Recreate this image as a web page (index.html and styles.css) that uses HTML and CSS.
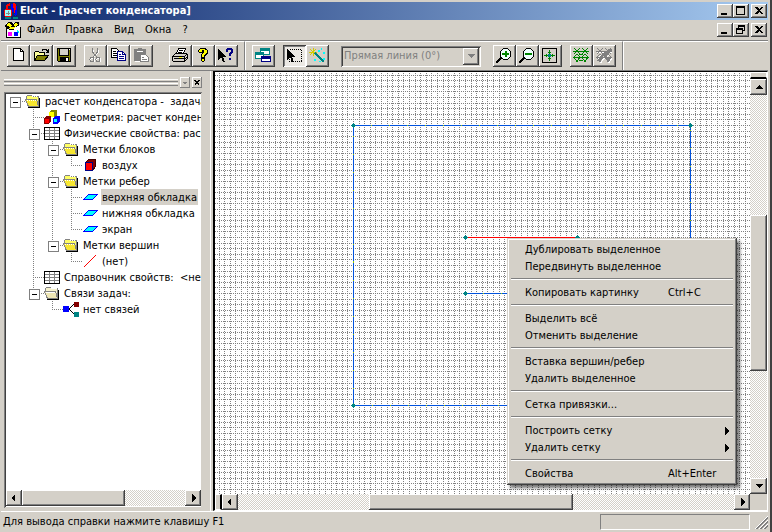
FILE: index.html
```html
<!DOCTYPE html>
<html lang="ru">
<head>
<meta charset="utf-8">
<title>Elcut - [расчет конденсатора]</title>
<link rel="stylesheet" href="styles.css">
</head>
<body>
<svg class="defs" aria-hidden="true">
  <symbol id="folder" viewBox="0 0 16 16">
    <path d="M2 5h13v10H3z" fill="#000"/>
    <path d="M1.5 3.5l1-1h4l1 1h6v9h-11z" fill="#ffff63" stroke="#848484"/>
    <path d="M.5 6.5h11l2 7h-10z" fill="#f7e730" stroke="#848484"/>
    <path d="M2 7.5h9M7 3.5h6" stroke="#fff" stroke-dasharray="1 1"/>
    <path d="M3 14.5h12M14.5 5v10" stroke="#000"/>
  </symbol>
  <symbol id="folder-pale" viewBox="0 0 16 16">
    <path d="M1.5 3.5l1-1h4l1 1h6v9h-11z" fill="#f7f3ce" stroke="#848484"/>
    <path d="M.5 6.5h11l2 7h-10z" fill="#efe7b5" stroke="#848484"/>
    <path d="M2 7.5h9M7 3.5h6" stroke="#fff"/>
    <path d="M3 14.5h12M14.5 5v10" stroke="#000"/>
  </symbol>
  <symbol id="table" viewBox="0 0 16 16">
    <path d="M.5 2.5h15v12H.5z" fill="#fff" stroke="#000"/>
    <path d="M1 5.5h14M1 8.5h14M1 11.5h14M5.500 3v11M10.500 3v11" stroke="#808080"/>
  </symbol>
  <symbol id="edge" viewBox="0 0 16 16">
    <path d="M6.500 5.500h9l-5 5h-9z" fill="#0ff" stroke="#00f"/>
  </symbol>
  <symbol id="left" viewBox="0 0 8 8"><path d="M5 0v8L1 4z"/></symbol>
  <symbol id="right" viewBox="0 0 8 8"><path d="M3 0v8l4-4z"/></symbol>
  <symbol id="up" viewBox="0 0 8 8"><path d="M0 6h8L4 2z"/></symbol>
  <symbol id="down" viewBox="0 0 8 8"><path d="M0 2h8L4 6z"/></symbol>
  <symbol id="min" viewBox="0 0 10 10"><path d="M1 7h6v2H1z"/></symbol>
  <symbol id="cross" viewBox="0 0 10 10"><path d="M1 1h2l2 2 2-2h2L6 4.500 9 8H7L5 6 3 8H1l3-3.500z"/></symbol>
</svg>
<div class="window">
  <header class="titlebar">
    <svg class="app-icon" viewBox="0 0 16 16"><path d="M4 6V3l3-2" fill="none" stroke="#f00" stroke-width="2"/><path d="M8 1h3v8H8z" fill="#00f"/><path d="M10 0h2l1 2v8h-2z" fill="#f00"/><path d="M13 3h1v8l-2 2-2-2h2z" fill="#00f"/><circle cx="5" cy="10" r="4" fill="#9ff" stroke="#f00"/><path d="M3 10h4M5 8v4" stroke="#888"/><path d="M2 15h6M10 15h5" stroke="#088" stroke-width="2"/></svg>
    <h1>Elcut - [расчет конденсатора]</h1>
    <div class="caption">
      <button aria-label="Свернуть"><svg><use href="#min"/></svg></button>
      <button aria-label="Развернуть"><svg viewBox="0 0 10 10"><path d="M.5 1h8v7.500h-8z" fill="none" stroke="#000"/><path d="M0 0h9v2H0z"/></svg></button>
      <button class="close" aria-label="Закрыть"><svg><use href="#cross"/></svg></button>
    </div>
  </header>
  <nav class="menubar">
    <svg class="doc-icon" viewBox="0 0 16 16"><path d="M1 1h11l3 3v12H1z" fill="#fff"/><path d="M1.500 6v9.500h14V5" fill="none" stroke="#000"/><path d="M0 3l3-3h3l2 2 3-2h3v4l-4 1-1 3H5L1 6z" fill="#000"/><path d="M1 3l3-2 3 2-2 2zM8 3l3-2 2 1-3 3zM3 6l3-1 4 0-1 2H5z" fill="#ff0"/><path d="M3 10h4v4H3z" fill="#f0f"/><path d="M9 10h4v4H9z" fill="#00f"/><path d="M12 8l2 2-1 2z" fill="#0ff"/></svg>
    <button>Файл</button><button>Правка</button><button>Вид</button><button>Окна</button><button>?</button>
    <div class="caption">
      <button aria-label="Свернуть документ"><svg><use href="#min"/></svg></button>
      <button aria-label="Восстановить документ"><svg viewBox="0 0 10 10"><path d="M2.500 3V1h6v4.500H7M.5 4h6v4.500h-6z" fill="none" stroke="#000"/><path d="M2 0h7v2H2zM0 3h7v2H0z"/></svg></button>
      <button class="close" aria-label="Закрыть документ"><svg><use href="#cross"/></svg></button>
    </div>
  </nav>
  <div class="toolbars">
    <div class="toolbar">
      <div class="group">
        <button aria-label="Создать"><svg viewBox="0 0 16 16"><path d="M3.500.5h7l3 3v9h-10z" fill="#fff" stroke="#000"/><path d="M10.500 0v3.500H14" fill="none" stroke="#000"/></svg></button>
        <button aria-label="Открыть"><svg viewBox="0 0 16 16"><path d="M1.500 12.500v-8l1-1h3l1 1h5v3" fill="#ff9" stroke="#000"/><path d="M1.500 12.500l3-5h11l-4 5z" fill="#808000" stroke="#000"/><path d="M9 2.500l1-1h3l2 2M15.500 1v3h-3" fill="none" stroke="#000"/></svg></button>
        <button aria-label="Сохранить"><svg viewBox="0 0 16 16"><path d="M1.500.5h13v13h-12l-1-1z" fill="#808000" stroke="#000"/><path d="M4 1h8v6H4z" fill="#d4d0c8"/><path d="M3.500 1v6.500h9V1" fill="none" stroke="#000"/><path d="M4 9h9v5H4z"/><path d="M10 10h2v3h-2zM13 1h1v1h-1z" fill="#fff"/></svg></button>
      </div>
      <div class="group">
        <button disabled aria-label="Вырезать"><svg viewBox="0 0 16 16"><g fill="none" stroke="#fff"><path d="M6 2v3l5 5M11 2v3L6 10"/><circle cx="5.500" cy="12" r="2"/><circle cx="11.500" cy="12" r="2"/></g><g fill="none" stroke="#808080"><path d="M5.500 0v4l5 6M10.500 0v4l-5 6"/><circle cx="5" cy="11.500" r="2"/><circle cx="11" cy="11.500" r="2"/></g></svg></button>
        <button aria-label="Копировать"><svg viewBox="0 0 16 16"><path d="M1.500.5h5l3 3v6h-8z" fill="#fff" stroke="#000"/><path d="M3 3.500h3M3 5.500h4M3 7.500h4" stroke="#000"/><path d="M7.500 3.500h5l3 3v6h-8z" fill="#fff" stroke="#000084"/><path d="M12.500 4v2.500h3M9 6.500h2M9 8.500h5M9 10.500h5" fill="none" stroke="#000084"/></svg></button>
        <button disabled aria-label="Вставить"><svg viewBox="0 0 16 16"><path d="M2 2h11v12H2z" fill="#fff"/><path d="M1 1h4V0h4v1h4v5H8v7H1z" fill="#808080"/><path d="M4 3h6v1H4z" fill="#fff"/><path d="M7.500 6.500h5l3 3v4h-8z" fill="#fff" stroke="#808080"/><path d="M9 9.500h2M9 11.500h5" stroke="#808080"/></svg></button>
      </div>
      <div class="group wide">
        <button aria-label="Печать"><svg viewBox="0 0 16 16"><path d="M4.500 5.500l2-5h7l-2 5" fill="#fff" stroke="#000"/><path d="M7 2.500h4M6 4.500h4" stroke="#000"/><path d="M.5 8.500l3-3h11l1 1v4l-3 3h-11l-1-1z" fill="#d4d0c8" stroke="#000"/><path d="M1 8.500h11.500v4M13 8l2-2M2 10.500h10M13 11l2-2" fill="none" stroke="#000"/><path d="M7 9h3v1H7z" fill="#ff0"/></svg></button>
        <button aria-label="Справка"><svg viewBox="0 0 16 16"><path d="M5 0h6v1h1v1h1v4h-1v1h-1v1h-1v5H9v1H7v-1H6V6h1V5H4V4H3V2h1V1h1z"/><path d="M5 1h5v1H5zM4 2h3v2H4zM9 2h3v3H9zM8 5h3v1H8zM7 6h3v1H7zM7 7h2v2H7zM7 11h2v2H7z" fill="#ff0"/></svg></button>
        <button aria-label="Контекстная справка"><svg viewBox="0 0 16 16"><path d="M0 1v11l3-3 2 5h2L5 9h3z"/><path d="M9 0h5v1h1v4h-1v1h-1v2h-2V5h1V4h1V2h-3v2H8V1h1zM11 10h2v2h-2z" fill="#000084"/></svg></button>
      </div>
    </div>
    <div class="toolbar second">
      <div class="group">
        <button aria-label="Окна задачи"><svg viewBox="0 0 16 16"><g fill="#fff"><path d="M5.500.5h9v6h-9z" stroke="#008484"/><path d="M.5 4.500h8v6h-8z" stroke="#008484"/><path d="M6.500 8.500h9v5h-9z" stroke="#000084"/></g><path d="M5 0h10v3H5zM0 4h9v3H0z" fill="#008484"/><path d="M6 8h10v3H6z" fill="#000084"/></svg></button>
      </div>
      <div class="group">
        <button class="pressed" aria-label="Выделение"><svg viewBox="0 0 16 16"><path d="M3.500 1.500h12v12h-12z" fill="none" stroke="#000" stroke-dasharray="1 1"/><path d="M1 0v12l3-3 2 5h2L6 9h3z"/></svg></button>
        <button aria-label="Вставка"><svg viewBox="0 0 16 16"><path d="M0 4.500h8M4 0v8M1 1l6 6M7 1L1 7" stroke="#d6ce00"/><path d="M6 5l8 8 1 1" stroke="#008484" stroke-width="2"/><path d="M9 2h2v2H9zM14 4h2v2h-2zM5 11h2v2H5zM14 10h2v2h-2zM10 13h2v1h-2zM12 0h1v2h-1z" fill="#0ff"/></svg></button>
      </div>
      <div class="combo"><select disabled aria-label="Тип линии"><option>Прямая линия (0°)</option></select><span class="drop"><svg><use href="#down"/></svg></span></div>
      <div class="group">
        <button aria-label="Увеличить"><svg viewBox="0 0 16 16"><circle cx="9.500" cy="6" r="5.500" fill="#efffff" stroke="#000"/><path d="M5 10l-5 5" stroke="#000" stroke-width="2"/><path d="M6 6h7M9.500 3v6" stroke="#008400" stroke-width="2"/></svg></button>
        <button aria-label="Уменьшить"><svg viewBox="0 0 16 16"><circle cx="9.500" cy="6" r="5.500" fill="#efffff" stroke="#000"/><path d="M5 10l-5 5" stroke="#000" stroke-width="2"/><path d="M6 6h7" stroke="#008400" stroke-width="2"/></svg></button>
        <button aria-label="Показать всё"><svg viewBox="0 0 16 16"><path d="M.5.5h14v14H.5z" fill="none" stroke="#000"/><path d="M2 7.500h11M7.500 2v11M4.500 6v3M10.500 6v3M6 4.500h3M6 10.500h3" stroke="#008400"/><path d="M6 6h3v3H6z" fill="#008484"/></svg></button>
      </div>
      <div class="group">
        <button aria-label="Построить сетку"><svg viewBox="0 0 16 16"><path d="M0 3.500h16M0 9.500h16M1 0l6 6M7 0L1 6M9 0l6 6M15 0L9 6M4 6L1 9l3 5 3-5zM12 6L9 9l3 5 3-5zM6 6h4M6 12h4" fill="none" stroke="#008400"/></svg></button>
        <button disabled aria-label="Удалить сетку"><svg viewBox="0 0 16 16"><path d="M1 4.500h15M1 10.500h15M2 1l6 6M16 1l-6 6M5 7l-3 3 3 5 3-5zM13 7l-3 3 3 5 3-5z" fill="none" stroke="#fff"/><path d="M0 3.500h16M0 9.500h16M1 0l6 6M7 0L1 6M9 0l6 6M15 0L9 6M4 6L1 9l3 5 3-5zM12 6L9 9l3 5 3-5z" fill="none" stroke="#808080"/><path d="M2 13l5-6 6-5h2l-6 6 5 5" fill="none" stroke="#808080" stroke-width="2"/></svg></button>
      </div>
    </div>
  </div>
  <main>
    <aside>
      <div class="grip"><div class="bars"><i></i><i></i></div><button aria-label="Меню панели" disabled><svg><use href="#down"/></svg></button><button aria-label="Закрыть панель"><svg><use href="#cross"/></svg></button></div>
      <div class="treebox">
        <ul>
          <li><i class="g h box"></i><svg><use href="#folder"/></svg><span>расчет конденсатора -&nbsp; задача</span></li>
          <li><i class="g"></i><i class="g v h"></i><svg viewBox="0 0 16 16"><path d="M5 3l2-2h6v5l-2 2H5z" fill="#848400"/><path d="M5 3h5v5H5z" fill="#ff0"/><path d="M0 9l2-2h5v5l-2 3H0z" fill="#840000"/><path d="M1 10h4v4H1z" fill="#f00"/><path d="M9 9l2-2h5v5l-2 3H9z" fill="#00f"/><path d="M10 10h3v3h-3z" fill="#0ff"/></svg><span>Геометрия: расчет конденсатора</span></li>
          <li><i class="g"></i><i class="g v h box"></i><svg><use href="#table"/></svg><span>Физические свойства: расчет</span></li>
          <li><i class="g"></i><i class="g v"></i><i class="g v h box"></i><svg><use href="#folder"/></svg><span>Метки блоков</span></li>
          <li><i class="g"></i><i class="g v"></i><i class="g v"></i><i class="g end h"></i><svg viewBox="0 0 16 16"><path d="M3.500 5.500l3-3h7v7l-3 4z" fill="#840000" stroke="#400000"/><path d="M3.500 5.500h7v8h-7z" fill="#f00" stroke="#000084"/></svg><span>воздух</span></li>
          <li><i class="g"></i><i class="g v"></i><i class="g v h box"></i><svg><use href="#folder"/></svg><span>Метки ребер</span></li>
          <li><i class="g"></i><i class="g v"></i><i class="g v"></i><i class="g v h"></i><svg><use href="#edge"/></svg><span class="selected">верхняя обкладка</span></li>
          <li><i class="g"></i><i class="g v"></i><i class="g v"></i><i class="g v h"></i><svg><use href="#edge"/></svg><span>нижняя обкладка</span></li>
          <li><i class="g"></i><i class="g v"></i><i class="g v"></i><i class="g end h"></i><svg><use href="#edge"/></svg><span>экран</span></li>
          <li><i class="g"></i><i class="g v"></i><i class="g end h box"></i><svg><use href="#folder"/></svg><span>Метки вершин</span></li>
          <li><i class="g"></i><i class="g v"></i><i class="g"></i><i class="g end h"></i><svg viewBox="0 0 16 16"><path d="M2 14L14 2" stroke="#f00"/></svg><span>(нет)</span></li>
          <li><i class="g"></i><i class="g v h"></i><svg><use href="#table"/></svg><span>Справочник свойств:&nbsp; &lt;нет&gt;</span></li>
          <li><i class="g"></i><i class="g end h box"></i><svg><use href="#folder-pale"/></svg><span>Связи задач:</span></li>
          <li><i class="g"></i><i class="g"></i><i class="g end h"></i><svg viewBox="0 0 16 16"><path d="M3 8h3l5-5M6 8l5 5" fill="none" stroke="#000"/><circle cx="3" cy="8" r="3.500" fill="#00f"/><path d="M11 1h5v5h-5z" fill="#840000"/><path d="M11 11h5v5h-5z" fill="#008484"/></svg><span>нет связей</span></li>
        </ul>
        <div class="scroll"><button aria-label="Влево"><svg><use href="#left"/></svg></button><i class="thumb tree-thumb"></i><i class="tree-rest"></i><button aria-label="Вправо"><svg><use href="#right"/></svg></button></div>
      </div>
    </aside>
    <section class="view">
      <svg class="model" role="img" aria-label="Геометрия модели">
        <defs>
          <pattern id="snap" x="138" y="53" width="28" height="28" patternUnits="userSpaceOnUse">
            <g stroke="#808080" stroke-dasharray="1 1">
              <path d="M0 .5h28M0 6.500h28M0 11.500h28M0 17.500h28M0 22.500h28"/>
              <path d="M.5 0v28M6.500 0v28M11.500 0v28M17.500 0v28M22.500 0v28"/>
            </g>
          </pattern>
        </defs>
        <rect width="100%" height="100%" fill="#fff"/>
        <rect width="100%" height="100%" fill="url(#snap)"/>
        <g fill="none">
          <path d="M138.500 53.500h337v280h-337zM250.500 221.500h112" stroke="#0052de"/>
          <path d="M138.500 53.500h337v280h-337zM250.500 221.500h112" stroke="#9c0" stroke-dasharray="1 17" stroke-dashoffset="-17"/>
          <path d="M250.500 165.500h112" stroke="#f00"/>
        </g>
        <path fill="#008484" d="M137 52h3v3h-3zM136 53h5v1h-5zM138 51h1v5h-1zM474 52h3v3h-3zM473 53h5v1h-5zM475 51h1v5h-1zM137 332h3v3h-3zM136 333h5v1h-5zM138 331h1v5h-1zM249 164h3v3h-3zM248 165h5v1h-5zM250 163h1v5h-1zM361 164h3v3h-3zM360 165h5v1h-5zM362 163h1v5h-1zM249 220h3v3h-3zM248 221h5v1h-5zM250 219h1v5h-1z"/>
      </svg>
      <div class="scroll vertical"><i class="split"></i><button aria-label="Вверх"><svg><use href="#up"/></svg></button><i class="v-before"></i><i class="thumb v-thumb"></i><i class="v-after"></i><button aria-label="Вниз"><svg><use href="#down"/></svg></button></div>
      <div class="scroll"><i class="split"></i><button aria-label="Влево"><svg><use href="#left"/></svg></button><i class="h-before"></i><i class="thumb h-thumb"></i><i class="h-after"></i><button aria-label="Вправо"><svg><use href="#right"/></svg></button></div>
      <div class="context" role="menu">
        <button role="menuitem">Дублировать выделенное</button>
        <button role="menuitem">Передвинуть выделенное</button>
        <hr>
        <button role="menuitem"><span>Копировать картинку</span><kbd>Ctrl+C</kbd></button>
        <hr>
        <button role="menuitem">Выделить всё</button>
        <button role="menuitem">Отменить выделение</button>
        <hr>
        <button role="menuitem">Вставка вершин/ребер</button>
        <button role="menuitem">Удалить выделенное</button>
        <hr>
        <button role="menuitem">Сетка привязки...</button>
        <hr>
        <button role="menuitem"><span>Построить сетку</span><svg><use href="#right"/></svg></button>
        <button role="menuitem"><span>Удалить сетку</span><svg><use href="#right"/></svg></button>
        <hr>
        <button role="menuitem"><span>Свойства</span><kbd>Alt+Enter</kbd></button>
      </div>
    </section>
  </main>
  <footer><span>Для вывода справки нажмите клавишу F1</span><div class="cell"></div><svg class="sizer" viewBox="0 0 13 13"><path d="M0 13L13 0M4 13l9-9M8 13l5-5" stroke="#fff"/><path d="M1 13L13 1M2 13L13 2M5 13l8-8M6 13l7-7M9 13l4-4M10 13l3-3" stroke="#808080"/></svg></footer>
</div>
</body>
</html>
```
FILE: styles.css
```css
* { box-sizing: border-box; }

body {
  margin: 0;
  background: #d4d0c8;
  color: #000;
  font: 11px/16px "DejaVu Sans Condensed", "Noto Sans", sans-serif;
}

button, select { font: inherit; color: inherit; }
button { margin: 0; padding: 0; border: 0; background: #d4d0c8; white-space: nowrap; }
svg { display: block; flex: none; shape-rendering: crispEdges; }
i { display: block; }
.defs { position: absolute; width: 0; height: 0; }

.window {
  display: flex;
  flex-direction: column;
  min-height: 100vh;
  padding: 2px 2px 0 1px;
  border-right: 2px solid #404040;
}

/* Title and menu */
.titlebar {
  display: flex;
  align-items: center;
  height: 18px;
  padding: 0 1px 0 2px;
  background: linear-gradient(90deg, #0a246a, #a6caf0);
  color: #fff;
}
.app-icon, .doc-icon { width: 16px; height: 16px; }
h1 { margin: 0 0 0 1px; font-size: 11px; line-height: 16px; font-weight: bold; white-space: nowrap; }

.caption { display: flex; margin-left: auto; }
.caption button {
  display: grid;
  place-items: center;
  width: 16px;
  height: 14px;
  box-shadow: inset -1px -1px #404040, inset 1px 1px #fff, inset -2px -2px #808080;
}
.caption .close { margin-left: 2px; }
.caption svg { width: 10px; height: 10px; }

.menubar { display: flex; align-items: center; height: 20px; padding: 0 1px 0 4px; }
.menubar > button { padding: 0 5px 0 6px; }

/* Toolbars */
.toolbars {
  display: flex;
  height: 31px;
  border-top: 1px solid #808080;
  border-bottom: 1px solid #808080;
}
.toolbar {
  display: flex;
  align-items: center;
  gap: 8px;
  padding: 0 6px;
  border-top: 1px solid #fff;
  border-right: 1px solid #808080;
}
.toolbar.second { border-left: 1px solid #fff; }
.toolbars::after { content: ""; flex: 1; border-top: 1px solid #fff; border-left: 1px solid #fff; }
.group { display: flex; }
.group.wide { margin-left: 8px; }
.group button {
  width: 23px;
  height: 22px;
  padding: 3px;
  box-shadow: inset -1px -1px #404040, inset 1px 1px #fff, inset -2px -2px #808080;
}
.group button.pressed {
  background: #ece9e4;
  box-shadow: inset 1px 1px #404040, inset -1px -1px #fff, inset 2px 2px #808080;
}
.group svg { width: 16px; height: 16px; }

.combo {
  display: flex;
  width: 140px;
  height: 21px;
  margin: 0 4px;
  padding: 2px;
  box-shadow: inset 1px 1px #808080, inset -1px -1px #fff, inset 2px 2px #404040;
}
.combo select {
  appearance: none;
  flex: 1;
  min-width: 0;
  padding: 0 1px;
  border: 0;
  background: #d4d0c8;
  color: #808080;
  opacity: 1;
}
.drop, .scroll button, .grip button {
  display: grid;
  place-items: center;
  flex: none;
  width: 16px;
  background: #d4d0c8;
  box-shadow: inset -1px -1px #404040, inset 1px 1px #fff, inset -2px -2px #808080;
}
.drop svg, .scroll svg { width: 8px; height: 8px; }
.drop svg { fill: #808080; }

/* Panes */
main { display: flex; flex: 1; }
aside {
  display: flex;
  flex-direction: column;
  width: 210px;
  padding: 6px 8px 3px 3px;
  border-right: 1px solid #fff;
}
.grip { display: flex; gap: 2px; height: 11px; margin-bottom: 4px; }
.bars { display: flex; flex-direction: column; flex: 1; gap: 1px; padding: 2px 0; }
.bars i { height: 3px; border-top: 1px solid #fff; border-bottom: 1px solid #808080; }
.grip button { width: 10px; box-shadow: inset -1px -1px #808080, inset 1px 1px #fff; }
.grip svg { width: 6px; height: 6px; }
.grip button:last-child svg { width: 8px; height: 8px; }
.grip button:disabled svg { fill: #808080; }

.treebox {
  display: flex;
  flex-direction: column;
  flex: 1;
  padding: 1px 1px 2px 2px;
  background: #fff;
  box-shadow: inset 1px 1px #808080, inset -1px -1px #d4d0c8, inset 2px 2px #404040;
}
ul { flex: 1; margin: 0; padding: 0; list-style: none; overflow: hidden; }
li { display: flex; height: 16px; line-height: 18px; }
li svg { width: 16px; height: 16px; margin-right: 3px; }
li span { padding: 0 1px; white-space: nowrap; }
.selected { background: #d4d0c8; }

/* Branch guides of the tree */
.g { position: relative; flex: none; width: 19px; height: 16px; }
.v::before, .end::before {
  content: "";
  position: absolute;
  left: 8px;
  top: 0;
  width: 1px;
  height: 16px;
  background: repeating-linear-gradient(#808080 0 1px, transparent 1px 2px);
}
.end::before { height: 9px; }
.h { background: repeating-linear-gradient(90deg, #808080 0 1px, transparent 1px 2px) 8px 8px / 11px 1px no-repeat; }
.box::after {
  content: "";
  position: absolute;
  left: 4px;
  top: 4px;
  width: 9px;
  height: 9px;
  border: 1px solid #808080;
  background: linear-gradient(#000, #000) center / 5px 1px no-repeat #fff;
}

/* Scroll bars */
.scroll {
  display: flex;
  height: 16px;
  background: repeating-conic-gradient(#fff 0 25%, #d4d0c8 0 50%) 0 0 / 2px 2px;
}
.scroll.vertical { flex-direction: column; width: 17px; height: auto; }
.vertical button { width: 100%; height: 16px; }
.thumb { background: #d4d0c8; box-shadow: inset -1px -1px #404040, inset 1px 1px #fff, inset -2px -2px #808080; }
.split { width: 7px; background: #d4d0c8; border: 1px solid #fff; border-right: 2px solid #000; }
.vertical .split { width: auto; height: 7px; border: 1px solid #fff; border-bottom: 2px solid #000; }
.tree-thumb { flex: 102; }
.tree-rest { flex: 60; }
.v-before { flex: 120; }
.v-thumb { flex: 156; }
.v-after { flex: 107; }
.h-before { flex: 131; }
.h-thumb { flex: 204; }
.h-after { flex: 161; }

.view {
  position: relative;
  display: grid;
  grid-template: 1fr 16px / 1fr 17px;
  flex: 1;
  min-width: 0;
  margin-left: 2px;
  border: 1px solid #fff;
  border-top-color: #000;
  border-left: 2px solid #000;
}
.view > .scroll { height: auto; }
.model { width: 100%; height: 100%; min-height: 0; }

.context {
  position: absolute;
  left: 292px;
  top: 166px;
  width: 230px;
  padding: 3px;
  background: #d4d0c8;
  box-shadow: inset -1px -1px #404040, inset 1px 1px #d4d0c8, inset -2px -2px #808080, inset 2px 2px #fff, 3px 3px 3px #0008;
}
.context button { display: flex; align-items: center; width: 100%; height: 17px; padding: 0 4px 0 15px; text-align: left; }
.context span { flex: 1; }
.context kbd { width: 62px; font: inherit; }
.context svg { width: 8px; height: 8px; }
hr { height: 2px; margin: 3px 1px 4px; border: 0; border-top: 1px solid #808080; border-bottom: 1px solid #fff; }

/* Status bar */
footer { display: flex; align-items: center; height: 21px; padding-left: 2px; border-top: 1px solid #fff; }
footer span { flex: 1; }
.cell { width: 150px; height: 16px; border: 1px solid #808080; border-right-color: #fff; border-bottom-color: #fff; }
.sizer { width: 13px; height: 13px; margin-left: 5px; }
```
